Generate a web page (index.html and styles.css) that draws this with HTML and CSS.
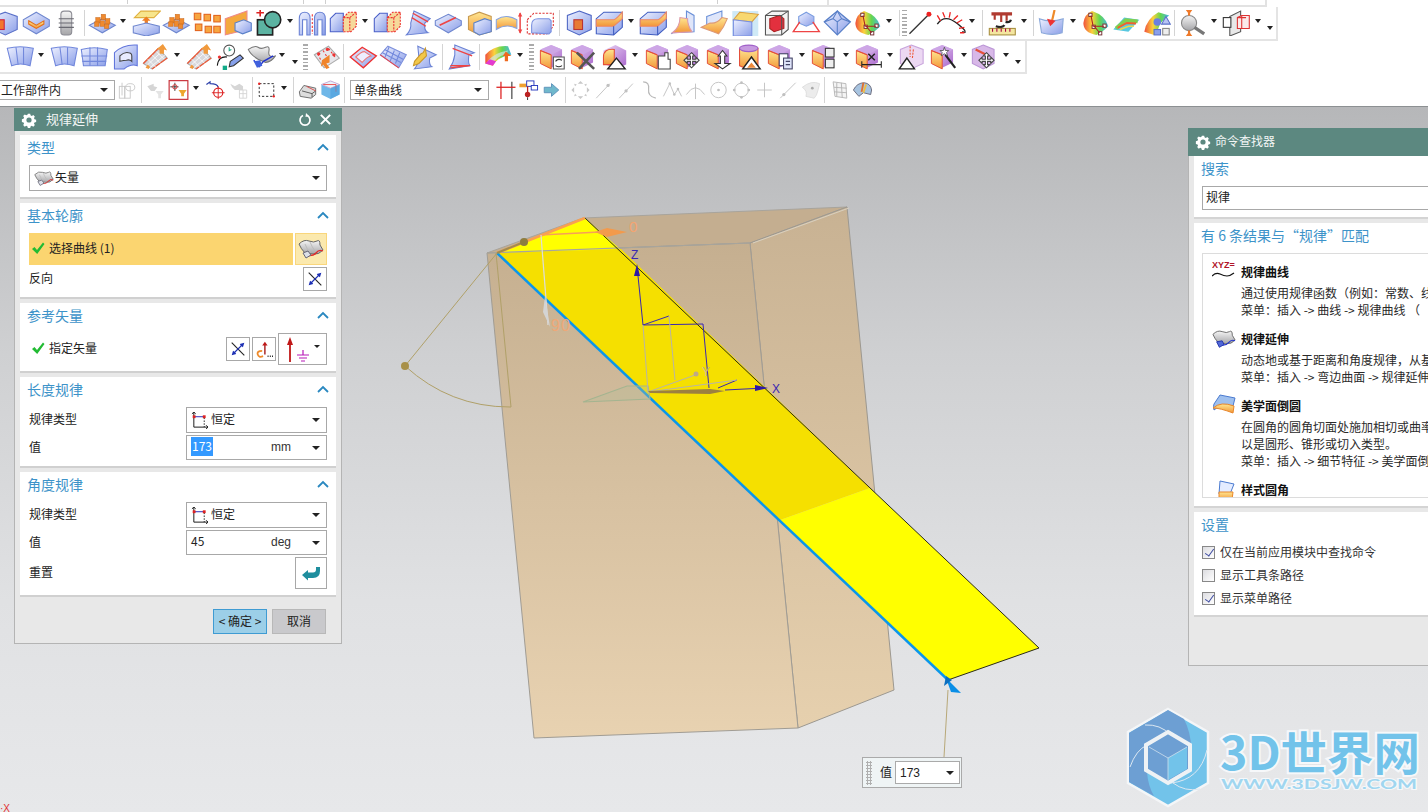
FILE: index.html
```html
<!DOCTYPE html>
<html lang="zh">
<head>
<meta charset="utf-8">
<title>规律延伸</title>
<link rel="stylesheet" href="styles.css">
</head>
<body>
<svg class="defs" aria-hidden="true">
<defs>
<linearGradient id="gb" x1="0" y1="0" x2="1" y2="1"><stop offset="0" stop-color="#eef1ff"/><stop offset="1" stop-color="#8a9ee8"/></linearGradient>
<linearGradient id="go" x1="0" y1="0" x2="0" y2="1"><stop offset="0" stop-color="#ffe690"/><stop offset="1" stop-color="#f29638"/></linearGradient>
<linearGradient id="gp" x1="0" y1="0" x2="1" y2="1"><stop offset="0" stop-color="#ead6f4"/><stop offset="1" stop-color="#a865cc"/></linearGradient>
<linearGradient id="gg" x1="0" y1="0" x2="0" y2="1"><stop offset="0" stop-color="#f5f5f5"/><stop offset="1" stop-color="#a5a5a8"/></linearGradient>
<linearGradient id="gr" x1="0" y1="0" x2="1" y2="0"><stop offset="0" stop-color="#f0503c"/><stop offset=".35" stop-color="#fcd23c"/><stop offset=".65" stop-color="#64d650"/><stop offset="1" stop-color="#46b8e6"/></linearGradient>
<linearGradient id="gf" x1="0" y1="0" x2="0" y2="1"><stop offset="0" stop-color="#c5af90"/><stop offset="1" stop-color="#e8d2b1"/></linearGradient>
<linearGradient id="gs" x1="0" y1="0" x2="0" y2="1"><stop offset="0" stop-color="#c8b293"/><stop offset="1" stop-color="#e6d0ae"/></linearGradient>

<symbol id="gear" viewBox="0 0 16 16"><path d="M6.600 1h2.800l.4 2 1.500.7 1.800-1.100 1.900 2-1.100 1.700.6 1.500 2 .5v2.600l-2 .5-.6 1.500 1.100 1.700-1.900 2-1.800-1.100-1.500.7-.4 2H6.600l-.4-2-1.500-.7-1.800 1.100-1.900-2 1.100-1.700-.6-1.500-2-.5V7.600l2-.5.6-1.500L1 3.900l1.900-2 1.800 1.100 1.500-.7z" transform="translate(1.300 .8) scale(.84)" fill="#fff"/><circle cx="8" cy="8" r="2.600" fill="#5c8880"/></symbol>

<symbol id="a1" viewBox="0 0 26 24"><polygon points="13,2 24,6 24,18 13,23 2,18 2,6" fill="url(#gb)" stroke="#5a70c8"/><rect x="3" y="9" width="9" height="9" fill="#f2772e" stroke="#c24"/></symbol>
<symbol id="a2" viewBox="0 0 26 24"><polygon points="13,2 25,9 25,15 13,22 1,15 1,9" fill="url(#gb)" stroke="#6f87cf"/><path d="M6 10l7 4 7-4v3l-7 4-7-4z" fill="url(#go)" stroke="#e2701e"/></symbol>
<symbol id="a3" viewBox="0 0 26 24"><rect x="8" y="1" width="10" height="22" rx="3" fill="url(#gg)" stroke="#8c8c94"/><path d="M6 8h14M6 12h14M6 16h14" stroke="#6a6a72"/></symbol>
<symbol id="a4" viewBox="0 0 26 24"><polygon points="13,8 25,14 13,21 1,14" fill="url(#gb)" stroke="#6f87cf"/><g fill="#f08a2e" stroke="#c96a1e" stroke-width=".5"><rect x="7" y="7" width="4" height="5"/><rect x="12" y="4" width="4" height="5"/><rect x="16" y="8" width="4" height="5"/><rect x="11" y="10" width="4" height="5"/><rect x="6" y="11" width="4" height="4"/><rect x="15" y="13" width="4" height="4"/></g></symbol>
<symbol id="a5" viewBox="0 0 26 24"><polygon points="8,1 26,1 20,7 2,7" fill="#f7e58c" stroke="#e0b040"/><path d="M13 16V8" stroke="#ef7e24" stroke-width="3"/><path d="M9 10l4-4 4 4z" fill="#ef7e24"/><polygon points="1,15 13,12 25,15 25,21 13,24 1,21" fill="url(#gb)" stroke="#6f87cf"/></symbol>
<symbol id="a6" viewBox="0 0 26 24"><g fill="#f7a640" stroke="#e2641e"><rect x="1" y="3" width="6" height="6"/><rect x="10" y="4" width="6" height="6"/><rect x="19" y="5" width="6" height="6"/><rect x="2" y="13" width="6" height="6"/><rect x="11" y="15" width="6" height="6"/><rect x="19" y="15" width="6" height="6"/></g></symbol>
<symbol id="a7" viewBox="0 0 26 24"><polygon points="1,8 21,1 21,18 1,23" fill="#f4a93e" stroke="#e88"/><polygon points="10,12 18,9 25,12 25,19 17,22 10,19" fill="url(#gb)" stroke="#5a80c8"/></symbol>
<symbol id="a8" viewBox="0 0 26 24"><rect x="3" y="9" width="14" height="14" fill="#5cb3a2" stroke="#222" stroke-width="1.500"/><circle cx="17" cy="9" r="7.500" fill="#5cb3a2" stroke="#222" stroke-width="1.500"/><path d="M2 2.500h7M5.500 0v6" stroke="#d22" stroke-width="1.500"/></symbol>
<symbol id="a9" viewBox="0 0 26 24"><path d="M1 23V8q0-6 5-6t5 6v15H8V9H4v14zM15 23V8q0-6 5-6t5 6v15h-3V9h-4v14z" fill="url(#gb)" stroke="#6a82d4"/><path d="M13 4v18" stroke="#e33" stroke-dasharray="2 1.500"/></symbol>
<symbol id="a10" viewBox="0 0 26 24"><polygon points="1,8 6,3 13,3 13,20 1,20" fill="url(#gb)" stroke="#4a5fc8"/><polygon points="13,7 18,2 25,2 25,15 20,20 13,20" fill="#f6d99a" stroke="#e33" stroke-dasharray="2 1"/><path d="M13 7h6v13M19 7l6-5" stroke="#e33" fill="none" stroke-dasharray="2 1"/></symbol>
<symbol id="a11" viewBox="0 0 26 24"><path d="M9 1l15 7-5 4q-1 7 3 9L2 23q5-5 4-11z" fill="url(#gb)" stroke="#6a82d4"/><path d="M8 3l14 8M7 7l13 8" stroke="#e44" stroke-width="1.300"/></symbol>
<symbol id="a12" viewBox="0 0 26 24"><polygon points="13,4 25,10 25,14 13,21 1,14 1,10" fill="url(#gb)" stroke="#6f87cf"/><path d="M5 14L20 7" stroke="#e44" stroke-width="1.500"/></symbol>
<symbol id="a13" viewBox="0 0 26 24"><polygon points="3,6 13,2 24,6 24,20 13,23 3,18" fill="url(#go)" stroke="#c89a50"/><polygon points="8,12 18,8 24,10 24,20 13,23 8,20" fill="url(#gb)" stroke="#5a80c8"/></symbol>
<symbol id="a14" viewBox="0 0 26 24"><path d="M1 9q9-6 19 0v8q-10-5-19 1z" fill="url(#go)" stroke="#88a4e0"/><path d="M23 3v18" stroke="#e55" stroke-width="1.500"/><path d="M21 6l2-4 2 4zM21 18l2 4 2-4z" fill="#e44"/></symbol>
<symbol id="a15" viewBox="0 0 26 24"><path d="M1 9l6-6h18v12l-6 7H1z" fill="none" stroke="#d33" stroke-dasharray="2 1.300"/><path d="M5 21v-7q0-6 6-6h10l2 2v10l-2 2z" fill="url(#gb)" stroke="#7a90e0"/></symbol>
<symbol id="a16" viewBox="0 0 26 24"><polygon points="13,1 24,5 24,18 13,23 2,18 2,5" fill="url(#gb)" stroke="#4e66c4"/><rect x="8" y="9" width="8" height="9" fill="#e87a34" stroke="#b33"/></symbol>
<symbol id="a17" viewBox="0 0 26 24"><polygon points="8,2 25,2 25,16 17,23 1,22 1,8" fill="url(#gb)" stroke="#3f5cc0"/><path d="M1 9h16q2 0 8-7v6l-8 7H1z" fill="url(#go)" stroke="#e86"/><path d="M17 15v8" stroke="#3f5cc0"/></symbol>
<symbol id="a18" viewBox="0 0 26 24"><path d="M15 1l7 4v15L2 21l-1 1 8-5q6 0 6-6z" fill="#dfe6fa" stroke="#6a90d8"/><path d="M9 7q0 9-7 14l18-1q-4-6-4-12z" fill="url(#go)" stroke="#d9a"/></symbol>
<symbol id="a19" viewBox="0 0 26 24"><polygon points="6,6 20,1 20,12 6,16" fill="#dfe6fa" stroke="#6a90d8"/><path d="M1 16l8-4q6 1 11-5l5 1q-3 8-8 14l-5-2z" fill="url(#go)" stroke="#d97"/></symbol>
<symbol id="a20" viewBox="0 0 26 24"><rect x="1" y="1" width="24" height="23" fill="#cfe9f6"/><polygon points="8,2 25,4 19,11 2,9" fill="#f8d870" stroke="#d9a040"/><polygon points="2,9 19,11 19,24 2,24" fill="url(#gb)" stroke="#7a90e0"/></symbol>
<symbol id="a21" viewBox="0 0 26 24"><polygon points="3,5 9,1 24,1 24,18 18,23 3,23" fill="#f4f4f4" stroke="#555"/><polygon points="7,8 16,5 20,8 20,17 11,20 7,17" fill="#e3303e" stroke="#a22"/><path d="M3 5h15v18M18 5l6-4" fill="none" stroke="#555"/></symbol>
<symbol id="a22" viewBox="0 0 26 24"><polygon points="13,2 20,6 20,12 13,15 6,12 6,6" fill="url(#gb)" stroke="#7a9ce0"/><path d="M7 11L1 20h24l-6-9" fill="none" stroke="#e44" stroke-width="1.300"/></symbol>
<symbol id="a23" viewBox="0 0 26 24"><polygon points="13,1 25,11 13,23 1,11" fill="url(#gb)" stroke="#5a80c8" stroke-width="1.200"/><path d="M1 11l8-3 4 3 4-3 8 3M13 11v12M9 8l4-7 4 7" fill="none" stroke="#5a80c8"/></symbol>
<symbol id="a24" viewBox="0 0 26 24"><path d="M10 1q12 4 15 14-6 6-11 8Q2 21 2 12 3 4 10 1z" fill="url(#gr)"/><g fill="#fff" stroke="#733" stroke-width=".9"><rect x="7" y="3" width="3" height="3"/><rect x="10" y="14" width="3" height="3"/><rect x="20" y="13" width="3" height="3"/><rect x="16" y="20" width="3" height="3"/></g><path d="M9 5l2 10 10 0M12 15l5 6" stroke="#a22" fill="none"/></symbol>
<symbol id="a25" viewBox="0 0 26 24"><path d="M3 22L21 4" stroke="#333" stroke-width="1.200"/><circle cx="21" cy="4" r="2.300" fill="#e22"/></symbol>
<symbol id="a26" viewBox="0 0 26 24"><path d="M1 13Q8 3 20 13t4 7" fill="none" stroke="#222" stroke-width="1.300"/><path d="M4 10L1 5M8 7L6 2M12 7l1-5M16 9l4-4M19 12l5-3M21 17l5-1M22 21h4" stroke="#e22" stroke-width="1.200"/></symbol>
<symbol id="a27" viewBox="0 0 26 24"><path d="M3 2h19v3h-4v5h-2V5h-3v6h-2V5H7v4H5V5H3z" fill="#b03a30"/><path d="M7 15q6 2 8-1M16 11q4 1 5-2" fill="none" stroke="#222" stroke-width="2"/><rect x="1" y="17" width="24" height="6" fill="#f4e6a0" stroke="#a89040"/><path d="M4 17v3M8 17v3M12 17v3M16 17v3M20 17v3" stroke="#a04"/></symbol>
<symbol id="a28" viewBox="0 0 26 24"><path d="M2 8q10 4 22 0l-1 13q-9 3-19 0z" fill="url(#gb)" stroke="#8aa8da"/><path d="M16 0l-3 13" stroke="#ee8a2a" stroke-width="2"/><path d="M9 8l3 7 5-5z" fill="#e33"/></symbol>
<symbol id="a29" viewBox="0 0 26 24"><polygon points="1,18 11,7 25,9 15,20" fill="#58c8e0"/><path d="M3.500 17L12.500 9.500 23.500 10.500" fill="none" stroke="#7fd050" stroke-width="3.500"/><path d="M5 16.500L13.500 12 22 12.500" fill="none" stroke="#f06030" stroke-width="1.800"/><path d="M7 18L15 15 20 15" fill="none" stroke="#e8d84a" stroke-width="1.500"/></symbol>
<symbol id="a30" viewBox="0 0 26 24"><path d="M1 20Q3 8 14 2l10 3q-9 6-10 12l-4 6z" fill="url(#gr)"/><circle cx="13" cy="11" r="3.500" fill="#6a7fe0"/><path d="M21 6l4 7h-8z" fill="#b8c4f5" stroke="#5a70c8"/><rect x="10" y="18" width="6" height="5" fill="#8ba0ea" stroke="#5a70c8"/><rect x="18" y="17" width="6" height="6" fill="#eee" stroke="#888"/></symbol>
<symbol id="a31" viewBox="0 0 26 24"><circle cx="10" cy="12" r="7" fill="url(#gg)" stroke="#888"/><path d="M15 16l9 6" stroke="#777" stroke-width="3"/><path d="M7 0h6l-3 4zM7 24h6l-3-4z" fill="#ef7a2a"/><path d="M10 0v5M10 24v-5" stroke="#ef7a2a" stroke-width="2"/></symbol>
<symbol id="a32" viewBox="0 0 26 24"><polygon points="7,6 17,1 17,20 7,24" fill="#e8e8e8" stroke="#555"/><rect x="1" y="7" width="7" height="9" fill="#fff" stroke="#333"/><polygon points="14,7 18,5 25,5 25,17 18,17 14,17" fill="#fbeaea" stroke="#d33"/><path d="M18 5v12M14 7h8" stroke="#d33"/></symbol>

<symbol id="b1" viewBox="0 0 26 24"><path d="M1 4q12-3 24 0l-3 16q-9-3-17 0z" fill="url(#gb)" stroke="#7288dc"/><path d="M9 3l2 16M16 3l0 16" stroke="#7288dc"/></symbol>
<symbol id="b2" viewBox="0 0 26 24"><path d="M1 5q12-3 24 0l-2 15-20 0z" fill="url(#gb)" stroke="#7288dc"/><path d="M1 11h24M2 16h22M9 3v17M16 3v17" stroke="#7288dc"/></symbol>
<symbol id="b3" viewBox="0 0 26 24"><path d="M3 8q8-8 21-7v19q-6-2-12 3H3z" fill="url(#gb)" stroke="#6276dc"/><path d="M8 16v-5q4-4 8-3 3 0 3 3v5q-2-2-5-1-2 0-6 1z" fill="#e8ecff" stroke="#444"/></symbol>
<symbol id="b4" viewBox="0 0 26 24"><polygon points="2,18 16,4 24,13 10,23" fill="#d8d8dc" stroke="#aaa"/><path d="M2 18l14-14" stroke="#ee5a38" stroke-width="1.200"/><path d="M10 23l14-10" stroke="#ee5a38" stroke-width="1.200"/><path d="M6 14l8 8M10 10l8 8M14 7l7 7M5 20l14-13M8 22l14-12" stroke="#fff" stroke-width=".7"/><path d="M20 0l-6 5 3 0 0 4 4 0 0-4 3 1z" fill="#f19a3c"/><path d="M6 19l-2 3 3 1 1-2z" fill="#f19a3c"/></symbol>
<symbol id="b5" viewBox="0 0 26 24"><circle cx="12" cy="6" r="5" fill="#fff" stroke="#555"/><path d="M12 3v3l2-1" stroke="#2a8" fill="none"/><path d="M1 20q1-9 9-8" fill="none" stroke="#111"/><circle cx="3" cy="12" r="1.500" fill="#e33"/><rect x="6" y="20" width="4" height="4" fill="#1a8"/><path d="M13 16l9-6 3 3-9 7-4 1z" fill="#86a0ea" stroke="#333"/></symbol>
<symbol id="b6" viewBox="0 0 26 24"><path d="M1 5q6-4 9-2t7 0 3 4 6 4q-4 6-9 6l-7-3Q3 10 1 5z" fill="url(#gg)" stroke="#777"/><path d="M6 15l5 6 4-5 9-5" fill="none" stroke="#23c" stroke-width="1.300"/><path d="M6 16l6-1 2 5-5 2z" fill="#4060dd"/></symbol>
<symbol id="b7" viewBox="0 0 26 24"><polygon points="2,10 15,2 25,13 11,22" fill="#e6e6ea" stroke="#aaa"/><path d="M5 9l3 6M10 6l5 8M15 4l6 8" stroke="#e33" stroke-dasharray="2 2"/><circle cx="6" cy="9" r="1.500" fill="#e33"/><circle cx="14" cy="5" r="1.500" fill="#e33"/><circle cx="20" cy="10" r="1.500" fill="#e33"/><path d="M16 10l-7 5-1 6 2-2 3 4 3-1-3-4 3-1z" fill="#f0842a"/></symbol>
<symbol id="b8" viewBox="0 0 26 24"><path d="M1 12L12 3l13 8-12 11z" fill="url(#gb)" stroke="#e33" stroke-width="1.300"/><path d="M6 12q5-5 8-5l6 4q-4 1-8 6z" fill="#eef" stroke="#e77"/></symbol>
<symbol id="b9" viewBox="0 0 26 24"><polygon points="1,10 8,2 25,10 18,22" fill="url(#gb)" stroke="#7d90dc"/><path d="M5 5l17 9M3 8l17 9M9 3l-4 10M14 6l-4 10M19 8l-4 10" stroke="#7288dc"/><path d="M1 10l17 12" stroke="#e44"/></symbol>
<symbol id="b10" viewBox="0 0 26 24"><path d="M7 2l17 8-6 3q-1 6 2 8L4 23q4-5 4-11z" fill="url(#gb)" stroke="#6a82d4"/><path d="M14 4l1 7-7 7-5 2 1-4 6-7 2-1z" fill="#f2c84a" stroke="#c8962a"/></symbol>
<symbol id="b11" viewBox="0 0 26 24"><path d="M7 1l18 7-5 2q-1 8 1 10L2 23q4-6 5-13z" fill="url(#gb)" stroke="#6a82d4"/><path d="M5 4l18 7M3 20l18 0M3 22l18-2" stroke="#e44" stroke-width="1.300"/></symbol>
<symbol id="b12" viewBox="0 0 26 24"><path d="M1 10Q9 1 22 2l3 8Q12 12 8 20L1 18z" fill="url(#gr)"/><path d="M3 16q6-8 19-10l-2 4q-9 1-12 9z" fill="#cde8e0" opacity=".7"/><path d="M1 18l7 2 3-4-6-2z" fill="#e33ad0"/><path d="M20 7l5 4h-3v5h-3v-5h-2z" fill="#ee6a1e"/></symbol>

<symbol id="pc" viewBox="0 0 26 24"><polygon points="12,1 22,5 22,17 12,22 2,17 2,5" fill="url(#gp)"/><polygon points="2,6 12,10 12,23 2,18" fill="url(#go)" stroke="#e4503a" stroke-width=".9"/><polygon points="2,5 12,1 22,5 12,10" fill="#cda6e6"/><path d="M2 6l10 4" stroke="#e4503a"/></symbol>

<symbol id="c1" viewBox="0 0 26 24"><use href="#pc"/><path d="M14 12h10v11H14z" fill="#fff" stroke="#555"/><path d="M16 16q2-3 6-1M22 20q-3 2-6 0" fill="none" stroke="#333"/></symbol>
<symbol id="c2" viewBox="0 0 26 24"><use href="#pc"/><path d="M7 8l16 15M23 8L9 23" stroke="#555" stroke-width="2.400"/></symbol>
<symbol id="c3" viewBox="0 0 26 24"><polygon points="14,1 24,6 24,19 14,23 3,18 3,6" fill="url(#gp)"/><path d="M3 19V12q0-8 10-7v14z" fill="url(#go)" stroke="#e4503a"/><polygon points="15,13 23,23 7,23" fill="#fff" stroke="#222" stroke-width="1.300"/></symbol>
<symbol id="c4" viewBox="0 0 26 24"><use href="#pc"/><path d="M13 11h6v-3h3v6h2v9H13z" fill="#fff" stroke="#444"/></symbol>
<symbol id="c5" viewBox="0 0 26 24"><use href="#pc"/><path d="M16 8l3 3h-2v3h3v-2l3 3-3 3v-2h-3v3h2l-3 3-3-3h2v-3h-3v2l-3-3 3-3v2h3v-3h-2z" fill="#fff" stroke="#444"/></symbol>
<symbol id="c6" viewBox="0 0 26 24"><use href="#pc"/><path d="M16 6l4 5h-2v7h5l-7 5-7-5h5v-7h-2z" fill="#fff" stroke="#333"/></symbol>
<symbol id="c7" viewBox="0 0 26 24"><path d="M4 4v16q9 5 17 0V4z" fill="url(#go)" stroke="#e4503a"/><ellipse cx="12.500" cy="4" rx="8.500" ry="3" fill="#c79ae0" stroke="#a060c8"/><polygon points="15,12 23,23 7,23" fill="#fff" stroke="#222" stroke-width="1.300"/><polygon points="15,17 19,22 11,22" fill="#ee8a3a"/></symbol>
<symbol id="c8" viewBox="0 0 26 24"><use href="#pc"/><rect x="12" y="9" width="8" height="11" fill="#fff" stroke="#446"/><rect x="16" y="13" width="8" height="10" fill="#dfe4fa" stroke="#446"/><path d="M18 16h4M18 19h4" stroke="#446"/></symbol>
<symbol id="c9" viewBox="0 0 26 24"><use href="#pc"/><rect x="14" y="4" width="8" height="8" fill="#eee" stroke="#333"/><rect x="14" y="14" width="8" height="8" fill="#eee" stroke="#333"/></symbol>
<symbol id="c10" viewBox="0 0 26 24"><use href="#pc"/><path d="M7 19h18M7 16v6M25 16v6" stroke="#222"/><path d="M13 9l6 6M19 9l-6 6" stroke="#222" stroke-width="1.400"/></symbol>
<symbol id="c11" viewBox="0 0 26 24"><polygon points="12,1 23,5 23,18 12,23 2,18 2,5" fill="#ecd8f2" stroke="#c8a4dc"/><path d="M11 2v10M14 5l-1 9" stroke="#ee5a38" stroke-dasharray="2 1"/><polygon points="8,13 15,23 1,23" fill="#fff" stroke="#222" stroke-width="1.300"/></symbol>
<symbol id="c12" viewBox="0 0 26 24"><use href="#pc"/><path d="M15 10l9 12" stroke="#222" stroke-width="2"/><path d="M14 3l1 3 3 0-2 2 1 3-3-2-3 2 1-3-2-2 3 0z" fill="#fff" stroke="#444" stroke-width=".7"/></symbol>
<symbol id="c13" viewBox="0 0 26 24"><polygon points="12,1 22,5 22,18 12,23 2,18 2,5" fill="#d8b8e8" stroke="#bb96d6"/><path d="M5 5l12 6" stroke="#e4503a" stroke-width="2"/><path d="M15 8l3 3h-2v3h3v-2l3 3-3 3v-2h-3v3h2l-3 3-3-3h2v-3h-3v2l-3-3 3-3v2h3v-3h-2z" fill="#fff" stroke="#444"/></symbol>

<symbol id="d1" viewBox="0 0 22 22"><g fill="none" stroke="#c8c8c8"><rect x="2" y="7" width="6" height="13"/><rect x="8" y="7" width="6" height="13"/><ellipse cx="14" cy="8" rx="5" ry="4"/><path d="M5 3v14"/></g></symbol>
<symbol id="d2" viewBox="0 0 22 22"><path d="M2 7l7-3v3l4 1-3 4H6z" fill="#d5d5d5"/><path d="M11 12h9l-3 4v4h-3v-4z" fill="#e4e4e4"/></symbol>
<symbol id="d3" viewBox="0 0 22 22"><rect x=".7" y=".7" width="20.600" height="20.600" fill="#fff" stroke="#c8343c" stroke-width="1.300"/><path d="M7 3v9M2 7.500h9" stroke="#333"/><circle cx="7" cy="7.500" r="2.400" fill="none" stroke="#d33"/><path d="M11 11h9l-3 4v3h-3v-3z" fill="#eda62e"/></symbol>
<symbol id="d4" viewBox="0 0 22 22"><path d="M1 5l4-3v2q8 0 9 4" fill="none" stroke="#2a3ea8" stroke-width="1.300"/><circle cx="14" cy="14" r="5" fill="none" stroke="#d22" stroke-width="1.300"/><path d="M14 7v14M7 14h14" stroke="#d22"/></symbol>
<symbol id="d5" viewBox="0 0 22 22"><path d="M2 4l5 3 5-3 4 3v4h-9l-3-3z" fill="#d6d6d6"/><path d="M12 11h8v9h-8zM16 11v9M12 15h8" fill="none" stroke="#d4d4d4"/></symbol>
<symbol id="d6" viewBox="0 0 22 22"><rect x="3" y="4" width="16" height="14" fill="none" stroke="#222" stroke-dasharray="2.500 2"/><circle cx="3" cy="4" r="1.300" fill="#e22"/><circle cx="19" cy="18" r="1.300" fill="#e22"/></symbol>
<symbol id="d7" viewBox="0 0 22 22"><path d="M2 13l5-7 13 3 0 7-5 4-12-2z" fill="#ddd" stroke="#666"/><path d="M5 12l11 3v4M16 15l4-3" stroke="#555" fill="none"/><path d="M10 7l10 5" stroke="#d44"/></symbol>
<symbol id="d8" viewBox="0 0 22 22"><polygon points="11,1 21,5 21,16 11,21 1,16 1,5" fill="#6fb7e8"/><polygon points="1,5 11,1 21,5 11,9" fill="#e9f2fa" stroke="#c8a8d4"/><path d="M3 5h14v8" stroke="#e44" fill="none"/><polygon points="11,9 21,5 21,16 11,21" fill="#4b9fdc" opacity=".6"/></symbol>
<symbol id="d9" viewBox="0 0 22 22"><path d="M18 2v19" stroke="#333" stroke-width="1.200"/><path d="M6 2v19" stroke="#d22" stroke-width="1.400"/><path d="M1 8h21" stroke="#d22" stroke-width="1.400"/></symbol>
<symbol id="d10" viewBox="0 0 22 22"><path d="M1 4h8v4H1z" fill="#f0a030"/><rect x="9" y="1" width="8" height="6" fill="#fff" stroke="#23b"/><rect x="14" y="6" width="7" height="5" fill="#fff" stroke="#23b"/><path d="M10 7v9" stroke="#b22" stroke-width="1.400"/><circle cx="10" cy="16" r="3" fill="#b22"/><path d="M10 19v3" stroke="#222"/></symbol>
<symbol id="d11" viewBox="0 0 22 22"><path d="M3 8h8V4l8 7-8 7v-4H3z" fill="#6fb8cc" stroke="#5a90b8"/></symbol>
<symbol id="e1" viewBox="0 0 22 22"><g fill="#c8c8c8"><path d="M11 1l3 3H8zM11 21l-3-3h6zM1 11l3-3v6zM21 11l-3 3V8z"/><path d="M4 4l3 1-2 2zM18 18l-3-1 2-2zM18 4l-1 3-2-2zM4 18l1-3 2 2z"/></g></symbol>
<symbol id="e2" viewBox="0 0 22 22"><path d="M3 20L18 4" stroke="#c0c0c0"/><circle cx="16" cy="6" r="1.800" fill="#c0c0c0"/></symbol>
<symbol id="e3" viewBox="0 0 22 22"><path d="M3 20L18 4" stroke="#c0c0c0"/><circle cx="10.500" cy="12" r="1.800" fill="#c0c0c0"/></symbol>
<symbol id="e4" viewBox="0 0 22 22"><path d="M4 2q7 0 6 8t8 10" fill="none" stroke="#b8b8b8" stroke-width="1.300"/></symbol>
<symbol id="e5" viewBox="0 0 22 22"><path d="M1 18L8 4l5 12 4-6 4 8" fill="none" stroke="#c0c0c0"/><g fill="#c0c0c0"><circle cx="8" cy="4" r="1.400"/><circle cx="13" cy="16" r="1.400"/><circle cx="17" cy="10" r="1.400"/></g></symbol>
<symbol id="e6" viewBox="0 0 22 22"><path d="M1 16Q11 1 21 16M11 4v17" fill="none" stroke="#c0c0c0"/></symbol>
<symbol id="e7" viewBox="0 0 22 22"><circle cx="11" cy="11" r="8.500" fill="none" stroke="#c0c0c0"/><circle cx="11" cy="11" r="1.500" fill="#c0c0c0"/></symbol>
<symbol id="e8" viewBox="0 0 22 22"><circle cx="11" cy="11" r="7.500" fill="none" stroke="#c0c0c0"/><g fill="#c0c0c0"><circle cx="11" cy="3" r="1.500"/><circle cx="11" cy="19" r="1.500"/><circle cx="3" cy="11" r="1.500"/><circle cx="19" cy="11" r="1.500"/></g></symbol>
<symbol id="e9" viewBox="0 0 22 22"><path d="M11 3v16M3 11h16" stroke="#c0c0c0"/></symbol>
<symbol id="e10" viewBox="0 0 22 22"><path d="M3 20L20 3" stroke="#c0c0c0"/><circle cx="7" cy="16" r="1.800" fill="#c0c0c0"/></symbol>
<symbol id="e11" viewBox="0 0 22 22"><path d="M2 8Q12 0 21 4l-2 8q-1 5-4 8l-9-2Q8 12 2 8z" fill="#ececec" stroke="#ddd"/><circle cx="13" cy="9" r="1.500" fill="#aaa"/></symbol>
<symbol id="e12" viewBox="0 0 22 22"><path d="M4 2l14 2 1 16-13-2z M8 3v15M13 3l1 16M5 8l14 1M5 13l14 1" fill="#f4f4f4" stroke="#b4b4b4"/></symbol>
<symbol id="e13" viewBox="0 0 22 22"><path d="M1 11Q5 3 13 3q7 1 8 8l-1 5-8-2-5 4z" fill="#a8c4e0" stroke="#667"/><path d="M12 3l-2 10" stroke="#e07030" stroke-width="2"/><path d="M15 5l-3 9" stroke="#f0c040" stroke-width="2"/></symbol>

<symbol id="sheetdlg" viewBox="0 0 26 22"><path d="M1 6q5-5 10-3t8 0 3 4l3 5q-4 5-10 4L7 15Q3 11 1 6z" fill="url(#gg)" stroke="#666"/><path d="M7 6q2 5 5 9M12 4q2 5 5 9" fill="none" stroke="#bbb"/><path d="M7 17q8 2 11-2t7-2" fill="none" stroke="#e02c2c" stroke-width="1.300"/><path d="M5 15l5-2 3 4-5 3z" fill="#dce0e8" stroke="#667"/></symbol>
<symbol id="sheetblue" viewBox="0 0 26 22"><path d="M1 6q5-5 10-3t8 0 3 4l3 5q-4 5-10 4L7 15Q3 11 1 6z" fill="url(#gg)" stroke="#666"/><path d="M7 17q8 2 11-2t7-2" fill="none" stroke="#2233cc" stroke-width="1.200"/><path d="M5 14l6-1 2 4-5 3z" fill="#5068d8" stroke="#2233aa"/></symbol>
<symbol id="law" viewBox="0 0 18 18"><path d="M3 0v16h15M1 2l2-2 2 2M16 14l2 2-2 2" fill="none" stroke="#111"/><path d="M3.500 5H14" stroke="#2222b4"/><path d="M14 6v10" stroke="#111" stroke-dasharray="1.500 1.500"/><rect x="1.800" y="3.500" width="3" height="3" fill="#d22"/><rect x="12.500" y="3.500" width="3" height="3" fill="#d22"/></symbol>
<symbol id="rev" viewBox="0 0 20 20"><path d="M3 3l14 14" stroke="#222" stroke-width="1.200"/><path d="M17 3l-5 1.500 1 1.500-4 4 1 1 4-4 1.500 1zM3 17l5-1.500-1-1.500 4-4-1-1-4 4-1.500-1z" fill="#1c2fb4"/></symbol>
<symbol id="chk" viewBox="0 0 14 14"><path d="M1 8l2.500-2 2.500 3 6-7.500 1.500 1.500L6.200 13z" fill="#22bb33"/></symbol>
</defs>
</svg>

<div class="page">
  <header class="bars">
    <div class="bar0">
      <i class="tick t1"></i><i class="tick t2"></i><i class="tick t3"></i><i class="tick t4"></i><i class="tick t5"></i>
    </div>
    <div class="tb r1">
      <svg class="i"><use href="#a1"/></svg><svg class="i"><use href="#a2"/></svg><svg class="i"><use href="#a3"/></svg><span class="sep"></span>
      <svg class="i"><use href="#a4"/></svg><span class="dd"></span><svg class="i"><use href="#a5"/></svg><svg class="i"><use href="#a4"/></svg><svg class="i"><use href="#a6"/></svg><svg class="i"><use href="#a7"/></svg><svg class="i"><use href="#a8"/></svg><span class="dd"></span>
      <svg class="i"><use href="#a9"/></svg><svg class="i"><use href="#a10"/></svg><span class="dd"></span><svg class="i"><use href="#a10"/></svg><svg class="i"><use href="#a11"/></svg><svg class="i"><use href="#a12"/></svg><svg class="i"><use href="#a13"/></svg><svg class="i"><use href="#a14"/></svg><svg class="i"><use href="#a15"/></svg><span class="sep wide"></span>
      <svg class="i"><use href="#a16"/></svg><svg class="i"><use href="#a17"/></svg><span class="dd"></span><svg class="i"><use href="#a17"/></svg><svg class="i"><use href="#a18"/></svg><svg class="i"><use href="#a19"/></svg><svg class="i"><use href="#a20"/></svg><svg class="i"><use href="#a21"/></svg><svg class="i"><use href="#a22"/></svg><svg class="i"><use href="#a23"/></svg><svg class="i"><use href="#a24"/></svg><span class="dd"></span><span class="sep"></span><span class="grip"></span>
      <svg class="i"><use href="#a25"/></svg><svg class="i"><use href="#a26"/></svg><span class="dd"></span><span class="sep wide"></span>
      <svg class="i"><use href="#a27"/></svg><span class="dd"></span><span class="sep"></span>
      <svg class="i"><use href="#a28"/></svg><span class="dd"></span><svg class="i"><use href="#a24"/></svg><svg class="i"><use href="#a29"/></svg><svg class="i"><use href="#a30"/></svg><span class="sep"></span>
      <svg class="i"><use href="#a31"/></svg><span class="dd"></span><svg class="i"><use href="#a32"/></svg><span class="dd"></span><span class="dd low"></span>
    </div>
    <div class="tb r2">
      <svg class="i"><use href="#b1"/></svg><span class="dd"></span><svg class="i"><use href="#b1"/></svg><svg class="i"><use href="#b2"/></svg><svg class="i"><use href="#b3"/></svg><svg class="i"><use href="#b4"/></svg><span class="dd"></span><svg class="i"><use href="#b4"/></svg><svg class="i"><use href="#b5"/></svg><svg class="i"><use href="#b6"/></svg><span class="dd"></span><span class="dd low"></span><span class="grip"></span>
      <svg class="i"><use href="#b7"/></svg><span class="sep"></span><svg class="i"><use href="#b8"/></svg><svg class="i"><use href="#b9"/></svg><svg class="i"><use href="#b10"/></svg><span class="sep"></span><svg class="i"><use href="#b11"/></svg><span class="sep"></span>
      <svg class="i"><use href="#b12"/></svg><span class="dd"></span><span class="grip"></span>
      <svg class="i"><use href="#c1"/></svg><svg class="i"><use href="#c2"/></svg><svg class="i"><use href="#c3"/></svg><span class="dd"></span><svg class="i"><use href="#c4"/></svg><svg class="i"><use href="#c5"/></svg><svg class="i"><use href="#c6"/></svg><svg class="i"><use href="#c7"/></svg><svg class="i"><use href="#c8"/></svg><span class="dd"></span><svg class="i"><use href="#c9"/></svg><span class="dd"></span><svg class="i"><use href="#c10"/></svg><span class="dd"></span><svg class="i"><use href="#c11"/></svg><svg class="i"><use href="#c12"/></svg><span class="dd"></span><svg class="i tight"><use href="#c13"/></svg><span class="dd"></span><span class="dd low"></span>
    </div>
    <div class="tb r3">
      <div class="combo c-left"><span>工作部件内</span><b class="arr"></b></div>
      <svg class="s"><use href="#d1"/></svg><span class="sep"></span><svg class="s"><use href="#d2"/></svg><svg class="s"><use href="#d3"/></svg><span class="dd"></span><svg class="s"><use href="#d4"/></svg><svg class="s"><use href="#d5"/></svg><span class="sep"></span><svg class="s"><use href="#d6"/></svg><span class="dd"></span><span class="sep"></span><svg class="s"><use href="#d7"/></svg><svg class="s"><use href="#d8"/></svg><span class="sep"></span>
      <div class="combo c-mid"><span>单条曲线</span><b class="arr"></b></div>
      <svg class="s"><use href="#d9"/></svg><svg class="s"><use href="#d10"/></svg><svg class="s"><use href="#d11"/></svg><span class="sep mid"></span>
      <svg class="s"><use href="#e1"/></svg><svg class="s"><use href="#e2"/></svg><svg class="s"><use href="#e3"/></svg><svg class="s"><use href="#e4"/></svg><svg class="s"><use href="#e5"/></svg><svg class="s"><use href="#e6"/></svg><svg class="s"><use href="#e7"/></svg><svg class="s"><use href="#e8"/></svg><svg class="s"><use href="#e9"/></svg><svg class="s"><use href="#e10"/></svg><svg class="s"><use href="#e11"/></svg><span class="sep mid"></span><svg class="s"><use href="#e12"/></svg><svg class="s"><use href="#e13"/></svg>
    </div>
  </header>

  <main class="view">
    <svg class="scene" viewBox="0 107 1428 705">
      <polygon points="487,253 583,218 847,207 750,243" fill="#c4ae90" stroke="#a8a49c"/>
      <polygon points="750,243 847,207 894,690 798,728" fill="url(#gs)" stroke="#9c9890"/>
      <polygon points="487,253 750,243 798,728 534,738" fill="url(#gf)" stroke="#a09c94"/>
      <path d="M753,243 L849,208" stroke="#d8d0c0" fill="none"/>
      <polygon points="497,253 585,218 621,250" fill="#ffff00"/>
      <polygon points="497,253 621,249 870,488 780,520" fill="#f5e000"/>
      <polygon points="780,520 870,488 1039,648 948,680" fill="#ffff00"/>
      <path d="M487,253 L750,243" stroke="#a8a59c" stroke-width="1.200"/>
      <path d="M585,218 L1039,648 L948,680" fill="none" stroke="#2a2a18"/>
      <path d="M497,253 L585,218" stroke="#f9a050" stroke-width="2.500"/>
      <path d="M497,253 L948,680" stroke="#0a96ea" stroke-width="2.500"/>
      <path d="M946,678 L961,693 L951,692 Z" fill="#0a8ee6"/><path d="M946,676 L952,680 L944,686 Z" fill="#0a6ec0"/>
      <path d="M948,690 L944,757" stroke="#b8a878"/>
      <path d="M497,253 L405,366 Q450,407 510,407 L511,407 L496,253" fill="none" stroke="#b0a068"/>
      <path d="M497,253 L524,242" stroke="#a08c50" stroke-width="2"/>
      <circle cx="524" cy="242" r="4" fill="#8d7d40"/>
      <circle cx="405" cy="366" r="4" fill="#a89048"/>
      <path d="M540,235 L600,232" stroke="#f8a058" stroke-width="1.500"/>
      <path d="M595,232 L607,228 L627,232 L607,237 Z" fill="#f39a4c"/>
      <text class="lbl orange" x="629" y="232">0</text>
      <path d="M541,235 L548,325" stroke="#dcdcdc" stroke-width="1.200"/>
      <path d="M545,296 L550,327 L543,312 Z" fill="#d4d4d4"/>
      <text class="lbl orange big" x="551" y="331">90</text>
      <path d="M583,402 L627,386 L648,386 L650,399 Z" fill="#b4bc98" fill-opacity=".35" stroke="#a4b490" stroke-width="1.200"/>
      <path d="M638,276 L643,325 L669,316 M643,325 L703,324 L709,388 M725,390 L765,388 M737,380 L718,388" fill="none" stroke="#3a28b0"/>
      <path d="M669,316 L675,380 M643,325 L648,392 L737,380 M648,392 L695,375" fill="none" stroke="#b8b4a8"/>
      <path d="M648,391 L710,389 L725,391 L710,394 L650,393 Z" fill="#9c8040"/>
      <path d="M637,264 L640,276 L634,276 Z" fill="#2c18a8"/>
      <path d="M755,385 L768,388 L755,391 Z" fill="#2c18a8"/>
      <circle cx="696" cy="374" r="2.500" fill="#bea888"/>
      <text class="lbl blue" x="631" y="259">Z</text>
      <text class="lbl blue" x="772" y="393">X</text>
      <text class="lbl tany" x="702" y="376">Y</text>
      <g class="logo">
        <polygon points="1168,709 1208,732 1208,783 1168,806 1128,783 1128,732" fill="#72c3ea" stroke="#f4f6f8" stroke-width="2.500"/>
        <path d="M1168,710 L1184,719 Q1192,735 1191,752 L1147,772 Q1148,786 1154,796 L1129,782 L1129,733 Z" fill="#6d9fd3"/>
        <path d="M1130,767 Q1136,750 1147,745 M1145,725 Q1160,724 1171,735 M1171,783 Q1200,780 1207,750 M1173,783 Q1185,792 1200,789" fill="none" stroke="#dce8f2"/>
        <polygon points="1168,732 1190,745 1190,770 1168,783 1146,770 1146,745" fill="#6d9fd3" stroke="#eef2f5" stroke-width="4"/>
        <polygon points="1168,736 1187,747 1168,758 1149,747" fill="#6d9fd3"/>
        <polygon points="1168,758 1187,747 1187,769 1168,780" fill="#72c3ea"/>
        <path d="M1149,747 L1168,758 L1187,747 M1168,758 V780" fill="none" stroke="#cfe0ee" stroke-width=".8"/>
        <text class="logo-t" x="1220" y="770" textLength="200" lengthAdjust="spacingAndGlyphs">3D世界网</text>
        <text class="logo-s" x="1221" y="789" textLength="196" lengthAdjust="spacingAndGlyphs">WWW.3DSJW.COM</text>
      </g>
    </svg>

    <section class="dlg left">
      <div class="title"><svg class="gear"><use href="#gear"/></svg><span class="ttl">规律延伸</span>
        <svg class="tool-r" viewBox="0 0 14 14"><path d="M9 2.500a5 5 0 1 1-4 0" fill="none" stroke="#fff" stroke-width="1.700"/><path d="M8 0l3 3-3.500 1z" fill="#fff"/></svg>
        <svg class="tool-x" viewBox="0 0 14 14"><path d="M2 2l10 10M12 2L2 12" stroke="#fff" stroke-width="2.200"/></svg>
      </div>
      <div class="body">
        <div class="sec">
          <div class="sec-h">类型<svg class="chev" viewBox="0 0 12 8"><path d="M1 7l5-5 5 5" fill="none" stroke="#2a88c0" stroke-width="1.800"/></svg></div>
          <div class="sec-b"><div class="field h26 wfull"><svg class="fi"><use href="#sheetdlg"/></svg><span>矢量</span><b class="arr"></b></div></div>
        </div>
        <div class="sec">
          <div class="sec-h">基本轮廓<svg class="chev" viewBox="0 0 12 8"><path d="M1 7l5-5 5 5" fill="none" stroke="#2a88c0" stroke-width="1.800"/></svg></div>
          <div class="sec-b">
            <div class="row sel"><div class="selbar"><svg class="chk"><use href="#chk"/></svg>选择曲线 (1)</div><div class="selbtn"><svg class="bi"><use href="#sheetdlg"/></svg></div></div>
            <div class="row r24"><span class="lab">反向</span><div class="btn b24"><svg class="ri"><use href="#rev"/></svg></div></div>
          </div>
        </div>
        <div class="sec">
          <div class="sec-h">参考矢量<svg class="chev" viewBox="0 0 12 8"><path d="M1 7l5-5 5 5" fill="none" stroke="#2a88c0" stroke-width="1.800"/></svg></div>
          <div class="sec-b">
            <div class="row r32">
              <span class="lab ck"><svg class="chk"><use href="#chk"/></svg>指定矢量</span>
              <div class="vecs">
                <div class="btn b24"><svg class="ri"><use href="#rev"/></svg></div>
                <div class="btn b24"><svg class="ri" viewBox="0 0 20 20"><path d="M11 16V5" stroke="#a01010" stroke-width="1.500"/><path d="M11 2l-3 4h6z" fill="#c01818"/><path d="M8 12q-6 0-5 4t6 2" fill="none" stroke="#ee8a2a" stroke-width="2"/><path d="M14 18h1M16.500 18h1M19 18h1" stroke="#111" stroke-width="1.500"/></svg></div>
                <div class="btn vecbig"><svg class="vi" viewBox="0 0 30 26"><path d="M8 26V7" stroke="#c01818" stroke-width="1.800"/><path d="M8 1l-3 8h6z" fill="#c01818"/><path d="M21 14v5M15 19h12M17 22h8M19 25h4" stroke="#b818b8" stroke-width="1.200"/></svg><b class="arr"></b></div>
              </div>
            </div>
          </div>
        </div>
        <div class="sec">
          <div class="sec-h">长度规律<svg class="chev" viewBox="0 0 12 8"><path d="M1 7l5-5 5 5" fill="none" stroke="#2a88c0" stroke-width="1.800"/></svg></div>
          <div class="sec-b">
            <div class="row h26"><span class="lab">规律类型</span><div class="field h26 w141"><svg class="fi law"><use href="#law"/></svg><span>恒定</span><b class="arr"></b></div></div>
            <div class="row h25"><span class="lab">值</span><div class="field h25 w141"><span class="val"><span class="hl">173</span></span><span class="unit">mm</span><b class="arr"></b></div></div>
          </div>
        </div>
        <div class="sec">
          <div class="sec-h">角度规律<svg class="chev" viewBox="0 0 12 8"><path d="M1 7l5-5 5 5" fill="none" stroke="#2a88c0" stroke-width="1.800"/></svg></div>
          <div class="sec-b">
            <div class="row h26"><span class="lab">规律类型</span><div class="field h26 w141"><svg class="fi law"><use href="#law"/></svg><span>恒定</span><b class="arr"></b></div></div>
            <div class="row h25"><span class="lab">值</span><div class="field h25 w141"><span class="val">45</span><span class="unit">deg</span><b class="arr"></b></div></div>
            <div class="row r32"><span class="lab">重置</span><div class="btn b32"><svg class="ret" viewBox="0 0 20 16"><path d="M1 10l6-5v2.500h5q3 0 3-3V2h4v4q0 7-7 7H7v2.500z" fill="#1f8e9e"/></svg></div></div>
          </div>
        </div>
        <div class="foot"><span class="ok">&lt; 确定 &gt;</span><span class="cancel">取消</span></div>
      </div>
    </section>

    <section class="dlg right">
      <div class="title tall"><svg class="gear"><use href="#gear"/></svg><span class="ttl small">命令查找器</span></div>
      <div class="body rb">
        <div class="rsec s1">
          <div class="rh">搜索</div>
          <div class="search">规律</div>
        </div>
        <div class="rsec s2">
          <div class="rh">有 6 条结果与“规律”匹配</div>
          <div class="list">
            <div class="item">
              <svg class="li" viewBox="0 0 24 24"><text class="xyz" x="0" y="8">XYZ=</text><path d="M0 16q4-4 8-2t7 2 7-3" fill="none" stroke="#111" stroke-width="1.200"/></svg>
              <div class="tx"><div class="nm">规律曲线</div><div>通过使用规律函数（例如：常数、线性、三次或方程）创建样条</div><div>菜单：插入 -&gt; 曲线 -&gt; 规律曲线 （</div></div>
            </div>
            <div class="item">
              <svg class="li"><use href="#sheetblue"/></svg>
              <div class="tx"><div class="nm">规律延伸</div><div>动态地或基于距离和角度规律，从基本片体创建规律控制的延伸</div><div>菜单：插入 -&gt; 弯边曲面 -&gt; 规律延伸</div></div>
            </div>
            <div class="item">
              <svg class="li" viewBox="0 0 24 24"><path d="M8 1l15 3-2 8-9-1q-6 1-10 5-1-4 0-6z" fill="#9fc0ee" stroke="#4a7ad0"/><path d="M1 14q8-7 21-2l-1 7Q8 14 1 14z" fill="url(#go)" stroke="#e8862a"/></svg>
              <div class="tx"><div class="nm">美学面倒圆</div><div>在圆角的圆角切面处施加相切或曲率约束，圆角的横截面形状可</div><div>以是圆形、锥形或切入类型。</div><div>菜单：插入 -&gt; 细节特征 -&gt; 美学面倒圆</div></div>
            </div>
            <div class="item">
              <svg class="li" viewBox="0 0 24 24"><path d="M8 3l14 3-4 10H7z" fill="#e4ecff" stroke="#4a7ad0"/><path d="M7 14h14l-1 8H7z" fill="url(#go)" stroke="#e8862a"/></svg>
              <div class="tx"><div class="nm">样式圆角</div></div>
            </div>
          </div>
        </div>
        <div class="rsec s3">
          <div class="rh">设置</div>
          <div class="opts">
            <label class="opt"><span class="cb on"></span><span class="ot">仅在当前应用模块中查找命令</span></label>
            <label class="opt"><span class="cb"></span><span class="ot">显示工具条路径</span></label>
            <label class="opt"><span class="cb on"></span><span class="ot">显示菜单路径</span></label>
          </div>
        </div>
      </div>
    </section>

    <div class="valbox"><span class="dots"></span><span class="vl">值</span><div class="vin">173<b class="arr"></b></div></div>
    <span class="redx">·X</span>
  </main>
</div>
</body>
</html>
```
FILE: styles.css
```css
* { box-sizing: border-box; }
html, body { margin: 0; padding: 0; width: 1428px; height: 812px; overflow: hidden; background: #fff; }
body { font-family: "Noto Sans CJK SC", "Liberation Sans", sans-serif; font-size: 12px; color: #222; text-spacing-trim: space-all; }
.defs { position: absolute; width: 0; height: 0; }
.page { display: flex; flex-direction: column; width: 1428px; height: 812px; }
.bars { flex: none; height: 106px; background: #fff; display: flex; flex-direction: column; overflow: hidden; }
.bar0 { flex: none; height: 7px; width: 1267px; border-bottom: 2px solid #e2e2e2; border-right: 2px solid #e2e2e2; position: relative; }
.tick { position: absolute; top: 0; width: 1px; height: 4px; background: #cfcfcf; }
.t1 { left: 127px; } .t2 { left: 303px; } .t3 { left: 325px; } .t4 { left: 717px; } .t5 { left: 827px; width: 2px; height: 5px; background: #e2e2e2; }
.tb { flex: none; display: flex; align-items: center; background: #fff; border-bottom: 2px solid #e4e4e4; border-right: 2px solid #e4e4e4; }
.r1 { height: 34px; width: 1278px; }
.r1 > :first-child { margin-left: -10px; }
.r2 { height: 33px; width: 1027px; padding-left: 4.500px; }
.r3 { height: 32px; width: 1428px; border: 0; }
.i { flex: none; width: 30.600px; height: 26px; }
.tight { margin-left: -3px; }
.s { flex: none; width: 23px; height: 20px; }
.dd { flex: none; width: 13.500px; height: 24px; position: relative; }
.dd::before { content: ""; position: absolute; left: 3px; top: 8px; border-style: solid; border-width: 4px 3.500px 0; border-color: #222 transparent transparent; }
.dd.low { width: 11px; }
.dd.low::before { top: 15px; left: 2px; }
.sep { flex: none; width: 5px; height: 26px; position: relative; }
.sep::before { content: ""; position: absolute; left: 2px; top: 0; bottom: 0; width: 1px; background: #d4d4d4; }
.sep.wide { width: 8px; }
.sep.wide::before { left: 3px; }
.sep.mid { width: 6px; }
.r2 .sep { width: 6.500px; }
.grip { flex: none; width: 5px; height: 26px; margin-right: -2px; background: repeating-linear-gradient(to bottom, #aaa 0 1.500px, transparent 1.500px 3.500px); }
.r2 .grip { margin: 0 3px 0 2px; }
.combo { flex: none; height: 20px; border: 1px solid #a8a8a8; background: #fff; display: flex; align-items: center; justify-content: space-between; font-size: 12px; color: #222; }
.combo span { padding-bottom: 2px; }
.c-left { width: 116px; margin-left: -1px; padding: 0 6px 0 1px; margin-right: 1px; }
.c-mid { width: 139px; padding: 0 6px 0 3px; margin: 0 5px 0 3px; }
.arr { flex: none; display: block; border-style: solid; border-width: 4px 4px 0; border-color: #222 transparent transparent; }

.view { flex: 1; position: relative; border-top: 1px solid #8c9092; background: linear-gradient(to bottom, #b6b7b9 0%, #cfd0d2 35%, #e0e1e3 70%, #e7e8ea 100%); overflow: hidden; }
.scene { position: absolute; left: 0; top: 0; width: 1428px; height: 705px; }
.lbl { font: 15px "Liberation Sans", sans-serif; }
.orange { fill: #f4a470; }
.big { font-size: 16px; letter-spacing: 1px; fill: #eea878; }
.blue { fill: #3a28b0; font-size: 12px; }
.tany { fill: #c4b294; font-size: 12px; }
.logo-t { font: 700 46px "Noto Sans CJK SC", "Lato", sans-serif; fill: #72c3ea; stroke: #f6f8fa; stroke-width: 4px; paint-order: stroke; }
.logo-s { font: 700 14px "Lato", sans-serif; fill: #a0d6f0; stroke: #f6f8fa; stroke-width: 2px; paint-order: stroke; }

.dlg { position: absolute; background: #e8e8e8; border: 1px solid #b4b4b4; display: flex; flex-direction: column; }
.left { left: 14px; top: 1px; width: 328px; height: 536px; }
.right { left: 1188px; top: 21px; width: 300px; height: 538px; }
.title { flex: none; height: 23px; margin: -1px -1px 0; background: #5c8880; color: #fff; display: flex; align-items: center; padding: 0 7px; }
.title.tall { height: 28px; }
.gear { width: 16px; height: 16px; flex: none; }
.ttl { margin-left: 9px; font-size: 13px; flex: 1; color: #f2f6f5; padding-bottom: 3px; }
.ttl.small { font-size: 12px; margin-left: 4px; padding-bottom: 4px; }
.tool-r { width: 14px; height: 14px; margin-right: 7px; }
.tool-x { width: 13px; height: 13px; margin-right: 3px; }
.body { flex: 1; display: flex; flex-direction: column; gap: 4px; padding: 4px 5px 0; }
.sec { background: #fff; border-bottom: 2px solid #d0d0d0; flex: none; }
.sec-h { height: 26px; padding: 0 7px 3px; display: flex; align-items: center; justify-content: space-between; color: #3d93c9; font-size: 14px; }
.chev { width: 12px; height: 8px; }
.sec-b { display: flex; flex-direction: column; gap: 2px; padding: 4px 9px 6px; }
.row { display: flex; align-items: center; justify-content: space-between; }
.h26 { height: 26px; } .h25 { height: 25px; } .r24 { height: 24px; } .r32 { height: 32px; }
.sel { height: 32px; gap: 2px; }
.field { background: #fff; border: 1px solid #a8a8a8; display: flex; align-items: center; padding: 0 6px 0 4px; font-size: 12px; }
.field span { padding-bottom: 1px; }
.field > span:first-of-type { flex: none; padding-bottom: 3px; }
.field .arr { margin-left: auto; }
.wfull { width: 298px; }
.w141 { width: 141px; }
.fi { width: 20px; height: 17px; margin-right: 1px; flex: none; }
.fi.law { width: 17px; margin-left: 0; margin-right: 3px; }
.val { width: 80px; line-height: 18px; }
.hl { display: inline-block; background: #3399ff; color: #fff; padding: 0 0 0 1px; width: 22px; }
.unit { font-family: "Liberation Sans", sans-serif; font-size: 12px; color: #333; }
.lab { font-size: 12px; color: #222; padding-bottom: 3px; }
.lab.ck { display: flex; align-items: center; }
.selbar { flex: 1; height: 32px; background: #fbd570; display: flex; align-items: center; font-size: 12px; padding-bottom: 3px; }
.chk { width: 14px; height: 14px; margin: 0 4px 0 2px; flex: none; }
.selbtn { width: 32px; height: 32px; flex: none; background: #fbe9ae; border: 1px solid #f9d67c; display: flex; align-items: center; justify-content: center; }
.bi { width: 26px; height: 22px; }
.btn { background: #fff; border: 1px solid #a8a8a8; display: flex; align-items: center; justify-content: center; flex: none; }
.b24 { width: 24px; height: 24px; }
.b32 { width: 32px; height: 32px; }
.ri { width: 18px; height: 18px; }
.vecs { display: flex; align-items: center; gap: 2px; }
.vecbig { width: 49px; height: 32px; justify-content: space-between; padding: 0 6px 0 3px; }
.vecbig .arr { border-width: 3px 3.500px 0; margin-bottom: 6px; }
.vi { width: 30px; height: 26px; }
.ret { width: 20px; height: 16px; }
.foot { display: flex; justify-content: flex-end; gap: 5px; padding: 8px 10px 0 0; }
.ok, .cancel { width: 54px; height: 25px; display: flex; align-items: center; justify-content: center; font-size: 12px; padding-bottom: 2px; }
.ok { background: #9ccfe8; border: 1px solid #3f9bd2; }
.cancel { background: #c9c9cc; border: 1px solid #b8b8b8; }

.rb { gap: 4px; padding: 0 0 0 5px; }
.rsec { background: #fff; border-bottom: 2px solid #d4d4d4; padding-left: 7px; flex: none; }
.s1 { height: 63px; }
.s2 { height: 285px; }
.s3 { height: 105px; }
.rh { color: #3d93c9; font-size: 14px; line-height: 19px; height: 30px; padding-top: 3px; }
.search { height: 24px; border: 1px solid #a8a8a8; line-height: 20px; padding-left: 3px; font-size: 12px; margin-left: 1px; }
.list { height: 245px; border: 1px solid #dcdcdc; border-right: 0; padding-top: 6px; overflow: hidden; display: flex; flex-direction: column; gap: 9px; margin-left: 1px; }
.item { display: flex; padding-left: 9px; flex: none; line-height: 17px; font-size: 12px; white-space: nowrap; color: #2a2a2a; }
.li { width: 24px; height: 24px; margin-right: 5px; flex: none; }
.nm { font-weight: 700; line-height: 23px; padding-bottom: 1px; color: #111; font-size: 12px; }
.tx { overflow: hidden; }
.xyz { font: 700 9px "Liberation Sans", sans-serif; fill: #b01428; }
.opts { display: flex; flex-direction: column; gap: 3px; margin-left: 1px; }
.opt { display: flex; align-items: center; height: 20px; color: #333; font-size: 12px; }
.ot { padding-bottom: 2px; }
.cb { width: 13px; height: 13px; border: 1px solid #888; background: linear-gradient(135deg, #dcdce0, #fff); margin-right: 5px; position: relative; flex: none; }
.cb.on::after { content: ""; position: absolute; left: 3.500px; top: 0.500px; width: 4px; height: 8px; border: solid #3c4aa0; border-width: 0 1.800px 1.800px 0; transform: rotate(35deg); }

.valbox { position: absolute; left: 862px; top: 650px; width: 100px; height: 31px; background: #eff4f5; border: 1px solid #aaa; display: flex; align-items: center; padding-left: 3px; }
.dots { width: 6px; height: 24px; background: radial-gradient(circle, #b0b0b0 1px, transparent 1.300px) 0 0 / 3px 3px; }
.vl { margin-left: 8px; font-size: 12px; padding-bottom: 2px; }
.vin { margin-left: 3px; width: 65px; height: 23px; border: 1px solid #aaa; background: #fff; display: flex; align-items: center; justify-content: space-between; padding: 0 5px 0 4px; font: 12px "Liberation Sans", sans-serif; }
.redx { position: absolute; left: 0; bottom: -2px; color: #e03030; font: 10px "Liberation Sans", sans-serif; }
```
